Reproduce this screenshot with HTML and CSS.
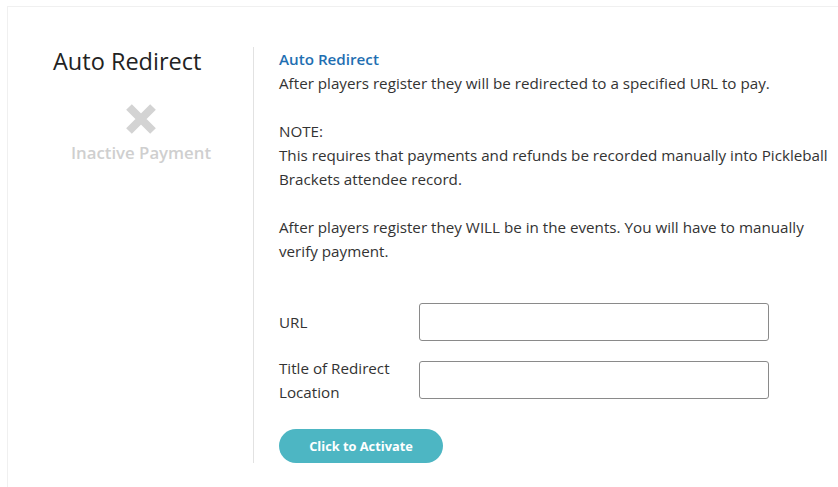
FILE: index.html
```html
<!DOCTYPE html>
<html>
<head>
<meta charset="utf-8">
<link rel="stylesheet" href="styles.css">
</head>
<body>
<div class="card">
  <div class="side">
    <h2 class="side-title">Auto Redirect</h2>
    <div class="status">
      <svg class="x-icon" width="34" height="32" viewBox="0 0 34 32">
        <path d="M5 4 L29 28 M29 4 L5 28" stroke="#d3d3d3" stroke-width="8" stroke-linecap="butt"/>
      </svg>
      <div class="status-text">Inactive Payment</div>
    </div>
  </div>
  <div class="main">
    <div class="main-title">Auto Redirect</div>
    <p class="para">After players register they will be redirected to a specified URL to pay.</p>
    <p class="para">NOTE:<br>This requires that payments and refunds be recorded manually into Pickleball Brackets attendee record.</p>
    <p class="para">After players register they WILL be in the events. You will have to manually verify payment.</p>
    <div class="form">
      <label class="label">URL</label>
      <input class="field" type="text">
      <label class="label">Title of Redirect<br>Location</label>
      <input class="field" type="text">
    </div>
    <button class="btn">Click to Activate</button>
  </div>
</div>
</body>
</html>
```

FILE: styles.css
```css
html, body {
  margin: 0;
  padding: 0;
  background: #fff;
}
body {
  font-family: "Open Sans", "Noto Sans", sans-serif;
  color: #333;
}
.card {
  margin: 6px 0 0 7px;
  border: 1px solid #f0f0f0;
  border-right: none;
  display: flex;
  padding-top: 40px;
  padding-bottom: 40px;
}
.side {
  width: 245px;
  flex: none;
}
.side-title {
  margin: 0 0 0 45px;
  font-size: 23.5px;
  font-weight: 400;
  line-height: 28px;
  color: #222;
  padding-top: 0;
}
.status {
  width: 266px;
  margin-top: 28px;
  display: flex;
  flex-direction: column;
  align-items: center;
}
.x-icon {
  display: block;
}
.status-text {
  margin-top: 6px;
  font-size: 16.8px;
  font-weight: 600;
  color: #cfcfcf;
  line-height: 24px;
}
.main {
  border-left: 1px solid #e2e2e2;
  padding-left: 25px;
  flex: 1;
}
.main-title {
  font-size: 15.2px;
  font-weight: 600;
  color: #1f6fb2;
  line-height: 24px;
  margin-top: 0;
}
.para {
  margin: 0 0 24px 0;
  font-size: 15.2px;
  line-height: 24px;
  max-width: 558px;
}
.form {
  margin-top: 40px;
  display: grid;
  grid-template-columns: 140px 350px;
  row-gap: 15px;
  align-items: center;
}
.label {
  font-size: 15.2px;
  line-height: 24px;
}
.field {
  box-sizing: border-box;
  width: 350px;
  height: 38px;
  border: 1px solid #8a8a8a;
  border-radius: 3px;
  margin: 0;
  padding: 0 8px;
  font: inherit;
}
.btn {
  margin-top: 25px;
  width: 164px;
  height: 34px;
  border: none;
  border-radius: 17px;
  background: #4db6c3;
  color: #fff;
  font-family: "Open Sans", sans-serif;
  font-size: 12.8px;
  font-weight: 700;
  display: block;
  padding: 0;
}
```
